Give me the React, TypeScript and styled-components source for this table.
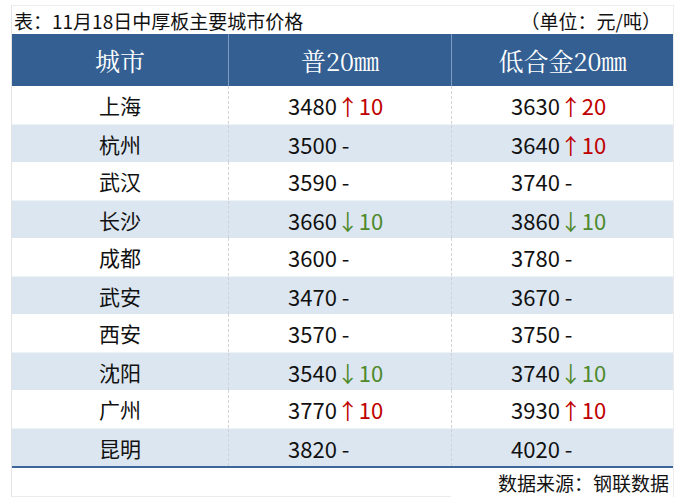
import React from "react";
import styled, { createGlobalStyle } from "styled-components";

const Global = createGlobalStyle`
  html, body { margin: 0; padding: 0; background: #ffffff; }
  body { font-family: "Noto Sans CJK SC", "Noto Sans", sans-serif; color: #111; }
`;

const Frame = styled.div`
  margin: 5px 0 0 11px;
  width: 661px;
  border-left: 1px solid #e4e4e4;
  border-top: 1px solid #ececec;
  border-right: 1px solid #ececec;
`;

const TitleBar = styled.div`
  height: 28px;
  display: flex;
  align-items: center;
  justify-content: space-between;
  padding: 0 12px 0 2px;
  font-size: 19px;
  line-height: 1;
  color: #111;
`;

const Table = styled.div`
  display: flex;
  flex-direction: column;
  border-bottom: 2px solid #3d6799;
`;

const Row = styled.div<{ $striped?: boolean }>`
  display: grid;
  grid-template-columns: 216px 223px 222px;
  height: 38px;
  background: ${(p) => (p.$striped ? "#dce6f0" : "#ffffff")};
  border-top: ${(p) => (p.$striped ? "1px solid #eef3f8" : "none")};
  box-sizing: border-box;
`;

const HeadRow = styled.div`
  display: grid;
  grid-template-columns: 216px 223px 222px;
  height: 52px;
  background: #345f93;
`;

const HeadCell = styled.div<{ $divider?: boolean }>`
  display: flex;
  align-items: center;
  justify-content: center;
  color: #ffffff;
  font-family: "Noto Serif CJK SC", "Liberation Serif", "Noto Sans CJK SC", serif;
  font-size: 25px;
  border-left: ${(p) => (p.$divider ? "1px solid #7f9cc0" : "none")};
`;

const NameCell = styled.div`
  display: flex;
  align-items: center;
  justify-content: center;
  font-size: 21px;
`;

const ValueCell = styled.div`
  display: flex;
  align-items: center;
  padding-left: 59px;
  font-size: 22px;
  border-left: 1px dashed #cfd3d8;
  white-space: pre;
`;

const Change = styled.span<{ $dir: "up" | "down" | "none" }>`
  color: ${(p) => (p.$dir === "up" ? "#c00000" : p.$dir === "down" ? "#4f8a2c" : "#111")};
`;

const Footer = styled.div`
  display: grid;
  grid-template-columns: 439px 1fr;
  height: 29px;
`;

const FooterBlank = styled.div`
  border-bottom: 1px solid #ececec;
`;

const FooterText = styled.div`
  display: flex;
  align-items: center;
  justify-content: flex-end;
  padding-right: 4px;
  font-size: 19px;
`;

type Val = { price: number; dir: "up" | "down" | "none"; delta?: number };
const data: { city: string; a: Val; b: Val }[] = [
  { city: "上海", a: { price: 3480, dir: "up", delta: 10 }, b: { price: 3630, dir: "up", delta: 20 } },
  { city: "杭州", a: { price: 3500, dir: "none" }, b: { price: 3640, dir: "up", delta: 10 } },
  { city: "武汉", a: { price: 3590, dir: "none" }, b: { price: 3740, dir: "none" } },
  { city: "长沙", a: { price: 3660, dir: "down", delta: 10 }, b: { price: 3860, dir: "down", delta: 10 } },
  { city: "成都", a: { price: 3600, dir: "none" }, b: { price: 3780, dir: "none" } },
  { city: "武安", a: { price: 3470, dir: "none" }, b: { price: 3670, dir: "none" } },
  { city: "西安", a: { price: 3570, dir: "none" }, b: { price: 3750, dir: "none" } },
  { city: "沈阳", a: { price: 3540, dir: "down", delta: 10 }, b: { price: 3740, dir: "down", delta: 10 } },
  { city: "广州", a: { price: 3770, dir: "up", delta: 10 }, b: { price: 3930, dir: "up", delta: 10 } },
  { city: "昆明", a: { price: 3820, dir: "none" }, b: { price: 4020, dir: "none" } },
];

function Value({ v }: { v: Val }) {
  return (
    <ValueCell>
      {v.price}
      {v.dir === "none" ? (
        <Change $dir="none"> -</Change>
      ) : (
        <Change $dir={v.dir}>
          {v.dir === "up" ? "↑" : "↓"}
          {v.delta}
        </Change>
      )}
    </ValueCell>
  );
}

export default function App() {
  return (
    <>
      <Global />
      <Frame>
        <TitleBar>
          <span>表：11月18日中厚板主要城市价格</span>
          <span>（单位：元/吨）</span>
        </TitleBar>
        <Table>
          <HeadRow>
            <HeadCell>城市</HeadCell>
            <HeadCell $divider>普20㎜</HeadCell>
            <HeadCell $divider>低合金20㎜</HeadCell>
          </HeadRow>
          {data.map((r, i) => (
            <Row key={r.city} $striped={i % 2 === 1}>
              <NameCell>{r.city}</NameCell>
              <Value v={r.a} />
              <Value v={r.b} />
            </Row>
          ))}
        </Table>
        <Footer>
          <FooterBlank />
          <FooterText>数据来源：钢联数据</FooterText>
        </Footer>
      </Frame>
    </>
  );
}
